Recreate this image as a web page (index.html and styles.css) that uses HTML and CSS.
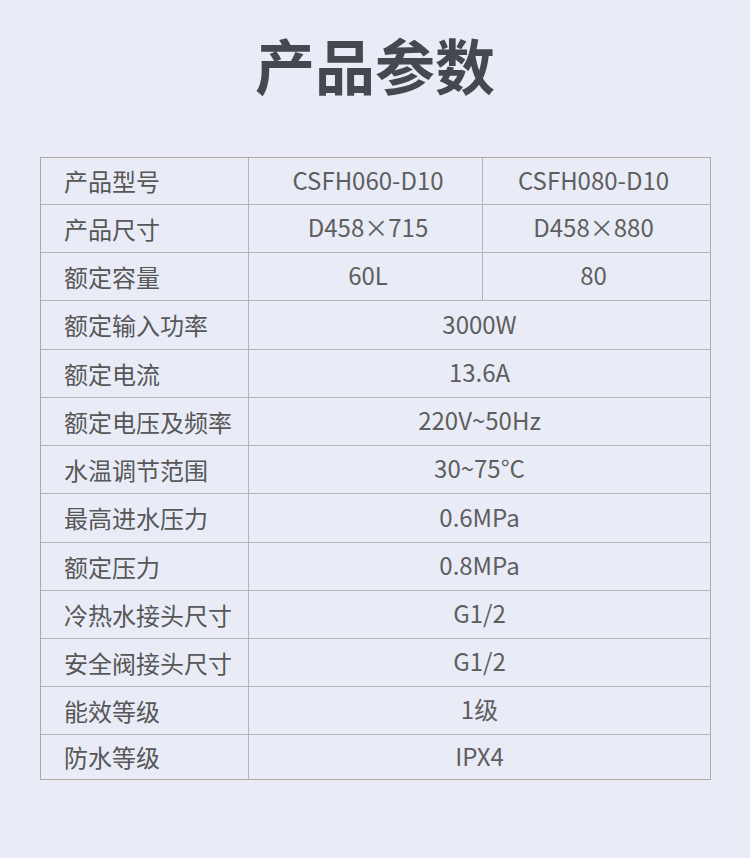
FILE: index.html
```html
<!DOCTYPE html>
<html lang="zh-CN">
<head>
<meta charset="utf-8">
<title>产品参数</title>
<link rel="stylesheet" href="styles.css">
</head>
<body>
<main class="page">
  <h1 class="title">产品参数</h1>
  <div class="spec">
    <div class="label first">产品型号</div>
    <div class="val c2 first">CSFH060-D10</div>
    <div class="val c3 first">CSFH080-D10</div>

    <div class="label">产品尺寸</div>
    <div class="val c2">D458×715</div>
    <div class="val c3">D458×880</div>

    <div class="label">额定容量</div>
    <div class="val c2">60L</div>
    <div class="val c3">80</div>

    <div class="label">额定输入功率</div>
    <div class="val wide">3000W</div>

    <div class="label">额定电流</div>
    <div class="val wide">13.6A</div>

    <div class="label">额定电压及频率</div>
    <div class="val wide">220V~50Hz</div>

    <div class="label">水温调节范围</div>
    <div class="val wide">30~75°C</div>

    <div class="label">最高进水压力</div>
    <div class="val wide">0.6MPa</div>

    <div class="label">额定压力</div>
    <div class="val wide">0.8MPa</div>

    <div class="label">冷热水接头尺寸</div>
    <div class="val wide">G1/2</div>

    <div class="label">安全阀接头尺寸</div>
    <div class="val wide">G1/2</div>

    <div class="label">能效等级</div>
    <div class="val wide">1级</div>

    <div class="label">防水等级</div>
    <div class="val wide">IPX4</div>
  </div>
</main>
</body>
</html>
```
FILE: styles.css
```css
* { box-sizing: border-box; }
html, body {
  margin: 0;
  padding: 0;
  background: #e9ecf7;
}
body {
  font-family: "Noto Sans CJK SC", "Noto Sans", sans-serif;
  width: 750px;
  min-height: 858px;
}
.page {
  padding: 34px 0 0 40px;
}
.title {
  margin: 0 0 63px -40px;
  width: 750px;
  text-align: center;
  font-size: 60px;
  line-height: 60px;
  font-weight: 700;
  color: #46474f;
  letter-spacing: 0;
}
.spec {
  width: 671px;
  border: 1px solid #b5a99b;
  display: grid;
  grid-template-columns: 207px 234px 228px;
  grid-template-rows: 46px 48px 48px 49px 48px 48px 48px 49px 48px 48px 48px 48px 45px;
}
.label, .val {
  display: flex;
  align-items: center;
  border-top: 1px solid #b3b3b8;
  font-size: 24px;
  line-height: 1;
  color: #575757;
}
.label {
  padding-left: 23px;
}
.val {
  justify-content: center;
  border-left: 1px solid #b3b3b8;
  padding-bottom: 3px;
  color: #5e5e5e;
}
.c2 { padding-left: 5px; }
.c3 { padding-right: 6px; }
.first { border-top: none; }
.wide { grid-column: 2 / 4; }
```
